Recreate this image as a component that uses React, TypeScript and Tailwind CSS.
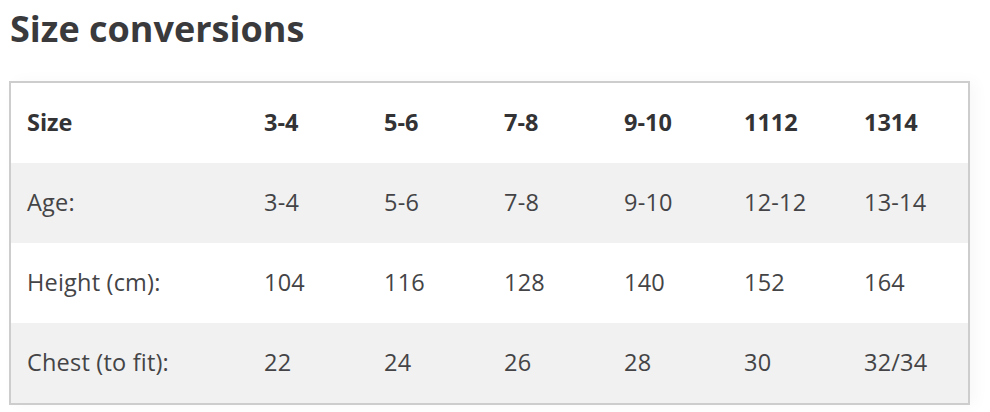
import React from 'react';

const HEAD = ['Size', '3-4', '5-6', '7-8', '9-10', '1112', '1314'];

const ROWS = [
    ['Age:', '3-4', '5-6', '7-8', '9-10', '12-12', '13-14'],
    ['Height (cm):', '104', '116', '128', '140', '152', '164'],
    ['Chest (to fit):', '22', '24', '26', '28', '30', '32/34'],
];

export default function App() {
    return (
        <div className="w-[990px] h-[412px] bg-white overflow-hidden font-['Open_Sans',sans-serif]">
            <h2 className="pl-[10px] pt-[7px] h-[81px] text-[36px] leading-[44px] font-bold text-[#3a3a3c]">
                Size conversions
            </h2>

            <div className="ml-[9px] w-[961px] border-2 border-[#cdcdcd] shadow-[6px_0_14px_rgba(0,0,0,0.03)]">
                <table className="w-full border-collapse table-fixed text-[23.5px]">
                    <colgroup>
                        <col className="w-[237px]" />
                        {HEAD.slice(1).map((_, i) => (
                            <col key={i} className="w-[120px]" />
                        ))}
                    </colgroup>
                    <thead>
                        <tr className="h-[80px] bg-white">
                            {HEAD.map((h, i) => (
                                <th key={i} className="pl-[16px] pb-[1px] text-left font-bold text-[#333335]">
                                    {h}
                                </th>
                            ))}
                        </tr>
                    </thead>
                    <tbody>
                        {ROWS.map((row, r) => (
                            <tr key={r} className={r % 2 === 0 ? 'h-[80px] bg-[#f1f1f1]' : 'h-[80px] bg-white'}>
                                {row.map((cell, i) => (
                                    <td key={i} className="pl-[16px] pb-[1px] text-[#444446] tracking-[0.2px]">
                                        {cell}
                                    </td>
                                ))}
                            </tr>
                        ))}
                    </tbody>
                </table>
            </div>
        </div>
    );
}
